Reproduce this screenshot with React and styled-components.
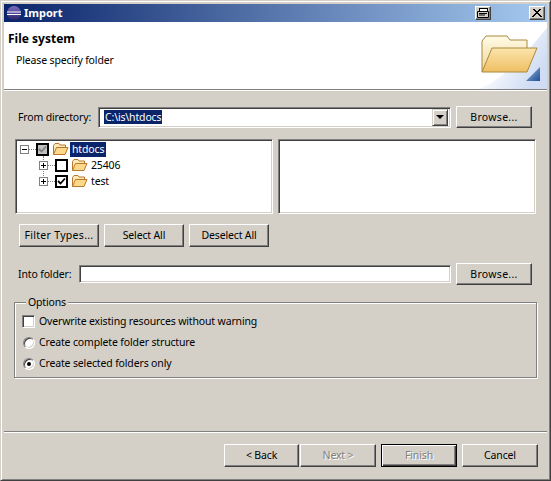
import React from 'react';
import styled, { createGlobalStyle } from 'styled-components';

const Global = createGlobalStyle`
  html, body { margin: 0; padding: 0; background: #d4d0c8; }
  * { box-sizing: border-box; }
`;
const Win = styled.div`
  width: 551px; height: 481px; padding: 3px;
  display: flex; flex-direction: column;
  background: #d4d0c8;
  border: 1px solid; border-color: #d4d0c8 #404040 #404040 #d4d0c8;
  box-shadow: inset 1px 1px 0 #fff, inset -1px -1px 0 #808080;
  font: 10.5px/13px "Noto Sans", sans-serif; letter-spacing: -0.15px; color: #000;
  overflow: hidden;
`;
const TitleBar = styled.div`
  height: 18px; flex: none; display: flex; align-items: center;
  padding: 0 2px 0 2px;
  background: linear-gradient(90deg, #0a246a, #a6caf0);
`;
const TitleText = styled.span`
  font: bold 11px/13px "Noto Sans", sans-serif; letter-spacing: 0; color: #fff; margin: -2px 0 0 2px; flex: 1;
`;
const TitleBtn = styled.div`
  width: 16px; height: 14px; flex: none; margin-left: ${p => p.$gap || 0}px;
  background: #d4d0c8; display: flex; align-items: center; justify-content: center;
  border: 1px solid; border-color: #fff #404040 #404040 #fff;
  box-shadow: inset -1px -1px 0 #808080;
`;
const Header = styled.div`
  height: 67px; flex: none; background: #fff; padding: 9px 0 0 4px;
  display: flex; justify-content: space-between;
`;
const HeadText = styled.div`display: flex; flex-direction: column;`;
const HeadTitle = styled.div`font: bold 12px/15px "Noto Sans", sans-serif; letter-spacing: 0;`;
const HeadSub = styled.div`margin: 7px 0 0 8px; line-height: 14px;`;
const BannerArt = styled.svg`width: 130px; height: 67px; margin-top: -9px; flex: none; display: block;`;
const Rule = styled.div`
  height: 2px; flex: none; border-top: 1px solid #808080; border-bottom: 1px solid #fff;
`;
const Body = styled.div`
  flex: 1; display: flex; flex-direction: column; padding: 15px 11px 0 10px;
`;
const Row = styled.div`
  display: flex; align-items: center; margin-top: ${p => p.$top || 0}px; height: ${p => p.$h}px;
`;
const Label = styled.label`width: ${p => p.$w}px; flex: none; padding-left: 4px;`;
const Sunken = styled.div`
  border: 1px solid; border-color: #808080 #fff #fff #808080;
  box-shadow: inset 1px 1px 0 #404040, inset -1px -1px 0 #d4d0c8;
  background: #fff;
`;
const Combo = styled(Sunken)`
  width: 353px; height: 21px; display: flex; align-items: center; padding: 2px 2px 2px 5px;
`;
const ComboText = styled.span`flex: 1; display: flex;`;
const Sel = styled.span`background: #0a246a; color: #fff; padding: 0 1px; line-height: 14px;`;
const ComboArrow = styled.div`
  width: 16px; height: 17px; background: #d4d0c8; display: flex; align-items: center; justify-content: center;
  border: 1px solid; border-color: #d4d0c8 #404040 #404040 #d4d0c8;
  box-shadow: inset 1px 1px 0 #fff, inset -1px -1px 0 #808080;
  &::after { content: ""; border: 4px solid transparent; border-top: 4px solid #000; border-bottom: 0; }
`;
const Btn = styled.button`
  width: ${p => p.$w}px; height: ${p => p.$h || 23}px; flex: none; padding: 0; margin: 0 0 0 ${p => p.$gap || 0}px;
  font: inherit; letter-spacing: ${p => p.$spread ? '0.3px' : 'inherit'}; color: #000; background: #d4d0c8;
  border: 1px solid; border-color: #fff #404040 #404040 #fff;
  box-shadow: inset -1px -1px 0 #808080;
  &:disabled { color: #808080; text-shadow: 1px 1px 0 #fff; }
`;
const DefaultBtn = styled(Btn)`
  border-color: #000;
  box-shadow: inset 1px 1px 0 #fff, inset -1px -1px 0 #404040, inset -2px -2px 0 #808080;
`;
const Panes = styled.div`display: flex; margin: 11px 0 0 1px; height: 75px; gap: 5px;`;
const TreePane = styled(Sunken)`
  width: 258px; position: relative; padding: 1px 0 0 4px;
`;
const ListPane = styled(Sunken)`width: 259px;`;
const TreeRow = styled.div`
  height: 16px; display: flex; align-items: center; padding-left: ${p => p.$indent}px; position: relative;
`;
const Expander = styled.span`
  width: 9px; height: 9px; flex: none; background: #fff; border: 1px solid #808080; position: relative;
  &::before { content: ""; position: absolute; left: 1px; top: 3px; width: 5px; height: 1px; background: #000; }
  ${p => p.$plus ? `&::after { content: ""; position: absolute; left: 3px; top: 1px; width: 1px; height: 5px; background: #000; }` : ''}
`;
const Dots = styled.span`
  width: 7px; flex: none; height: 0; border-top: 1px dotted #808080;
`;
const VDots = styled.span`
  position: absolute; left: 27px; top: 16px; height: 26px; width: 0; border-left: 1px dotted #808080;
`;
const Check = styled.span`
  width: 13px; height: 13px; flex: none; border: 2px solid #000; display: flex; align-items: center; justify-content: center;
  background: ${p => p.$gray ? '#c0c0c0' : '#fff'};
`;
const TreeLabel = styled.span`
  margin-left: ${p => p.$sel ? 1 : 3}px; padding: 0 ${p => p.$sel ? 2 : 0}px; line-height: 15px;
  ${p => p.$sel ? 'background:#0a246a;color:#fff;' : ''}
`;
const Buttons = styled.div`display: flex; margin: 10px 0 0 5px; gap: 5px;`;
const IntoInput = styled(Sunken)`width: 372px; height: 18px;`;
const Group = styled.fieldset`
  margin: 10px 0 0 0; padding: 2px 7px 0 7px; height: 83px; width: 523px; min-width: 0;
  border: 1px solid #808080; box-shadow: 1px 1px 0 #fff, inset 1px 1px 0 #fff;
`;
const Legend = styled.legend`padding: 0 2px; margin-left: 4px; background: #d4d0c8; line-height: 15px; height: 14px;`;
const Option = styled.div`height: 21px; display: flex; align-items: center;`;
const OptBox = styled.span`
  width: 13px; height: 13px; flex: none; margin-right: 4px; background: #fff;
  border: 1px solid; border-color: #808080 #fff #fff #808080;
  box-shadow: inset 1px 1px 0 #404040, inset -1px -1px 0 #d4d0c8;
`;
const Radio = styled.span`
  width: 12px; height: 12px; flex: none; margin: 0 4px 0 1px; border-radius: 50%; background: #fff; position: relative;
  border: 1px solid; border-color: #808080 #fff #fff #808080;
  box-shadow: inset 1px 1px 0 #404040, inset -1px -1px 0 #d4d0c8;
  ${p => p.$on ? `&::after { content: ""; position: absolute; left: 3px; top: 3px; width: 4px; height: 4px; border-radius: 50%; background: #000; }` : ''}
`;
const Footer = styled.div`
  margin-top: 52px; flex: none; height: 46px; padding: 12px 9px 0 0; display: flex; justify-content: flex-end;
  border-top: 1px solid #808080; box-shadow: inset 0 1px 0 #fff;
`;

const Folder = () => (
  <svg width="17" height="14" viewBox="0 0 17 14" style={{ flex: 'none', marginLeft: 3 }}>
    <path d="M1.5 12.5V3.5L3 1.5H7L8 3H13.5V5.5" fill="#fde9b8" stroke="#b8772a" />
    <path d="M1.5 12.5L4.5 5.5H16L13 12.5Z" fill="#fbd88a" stroke="#b8772a" />
  </svg>
);
const Tick = ({ color = '#000' }) => (
  <svg width="9" height="9" viewBox="0 0 9 9">
    <path d="M1 4L3.5 6.5L8 1.5" fill="none" stroke={color} strokeWidth="1.8" />
  </svg>
);

export default function App() {
  return (
    <>
      <Global />
      <Win>
        <TitleBar>
          <svg width="16" height="16" viewBox="0 0 16 16" style={{ flex: 'none' }}>
            <defs>
              <linearGradient id="ecl" x1="0" y1="0" x2="0" y2="1">
                <stop offset="0" stopColor="#7a6cc0" />
                <stop offset="1" stopColor="#2c2468" />
              </linearGradient>
            </defs>
            <circle cx="8" cy="8" r="7" fill="url(#ecl)" />
            <path d="M1 7H15M1 9.5H15" stroke="#fff" strokeWidth="1" />
          </svg>
          <TitleText>Import</TitleText>
          <TitleBtn $gap={0}>
            <svg width="12" height="10" viewBox="0 0 12 10">
              <rect x="2.5" y="0.5" width="8" height="3" fill="#fff" stroke="#000" />
              <path d="M0.5 3.5H11.5V9.5H0.5Z" fill="#d4d0c8" stroke="#000" />
              <path d="M2 5.5H10M2 7H8" stroke="#000" />
            </svg>
          </TitleBtn>
          <TitleBtn $gap={38}>
            <svg width="10" height="8" viewBox="0 0 10 8">
              <path d="M1 0L9 8M9 0L1 8M2 0L10 8M8 0L0 8" stroke="#000" strokeWidth="1" />
            </svg>
          </TitleBtn>
        </TitleBar>
        <Header>
          <HeadText>
            <HeadTitle>File system</HeadTitle>
            <HeadSub>Please specify folder</HeadSub>
          </HeadText>
          <BannerArt viewBox="0 0 130 67">
            <defs>
              <linearGradient id="bg" x1="0" y1="0.2" x2="0.9" y2="0.7">
                <stop offset="0.3" stopColor="#fff" />
                <stop offset="1" stopColor="#cfdcf3" />
              </linearGradient>
              <linearGradient id="front" x1="0" y1="0" x2="0" y2="1">
                <stop offset="0" stopColor="#fbe5ad" />
                <stop offset="1" stopColor="#eebf62" />
              </linearGradient>
              <linearGradient id="back" x1="0" y1="0" x2="0" y2="1">
                <stop offset="0" stopColor="#fffbe8" />
                <stop offset="1" stopColor="#f0d595" />
              </linearGradient>
              <linearGradient id="tri" x1="0" y1="0" x2="1" y2="1">
                <stop offset="0" stopColor="#9cb8e0" />
                <stop offset="1" stopColor="#1c4d94" />
              </linearGradient>
            </defs>
            <path d="M60 67C85 60 110 30 130 6V67Z" fill="url(#bg)" />
            <path d="M65 50V19L69 14H90L93 18H110V29" fill="url(#back)" stroke="#a98a3c" />
            <path d="M65 50L75 26H120L110 50Z" fill="url(#front)" stroke="#a98a3c" />
            <path d="M109 59L123 45V59Z" fill="url(#tri)" />
          </BannerArt>
        </Header>
        <Rule />
        <Body>
          <Row $h={22}>
            <Label $w={84}>From directory:</Label>
            <Combo>
              <ComboText><Sel>C:\is\htdocs</Sel></ComboText>
              <ComboArrow />
            </Combo>
            <Btn $w={76} $h={22} $gap={5} $spread>Browse...</Btn>
          </Row>
          <Panes>
            <TreePane>
              <VDots />
              <TreeRow $indent={0}>
                <Expander />
                <Dots />
                <Check $gray><Tick color="#808080" /></Check>
                <Folder />
                <TreeLabel $sel>htdocs</TreeLabel>
              </TreeRow>
              <TreeRow $indent={19}>
                <Expander $plus />
                <Dots />
                <Check />
                <Folder />
                <TreeLabel>25406</TreeLabel>
              </TreeRow>
              <TreeRow $indent={19}>
                <Expander $plus />
                <Dots />
                <Check><Tick /></Check>
                <Folder />
                <TreeLabel>test</TreeLabel>
              </TreeRow>
            </TreePane>
            <ListPane />
          </Panes>
          <Buttons>
            <Btn $w={80} $spread>Filter Types...</Btn>
            <Btn $w={80}>Select All</Btn>
            <Btn $w={80}>Deselect All</Btn>
          </Buttons>
          <Row $h={22} $top={16}>
            <Label $w={65}>Into folder:</Label>
            <IntoInput />
            <Btn $w={76} $h={22} $gap={5} $spread>Browse...</Btn>
          </Row>
          <Group>
            <Legend>Options</Legend>
            <Option><OptBox />Overwrite existing resources without warning</Option>
            <Option><Radio />Create complete folder structure</Option>
            <Option><Radio $on />Create selected folders only</Option>
          </Group>
        </Body>
        <Footer>
          <Btn $w={75}>&lt; Back</Btn>
          <Btn $w={76} $gap={1} disabled>Next &gt;</Btn>
          <DefaultBtn $w={76} $gap={5} disabled>Finish</DefaultBtn>
          <Btn $w={76} $gap={5}>Cancel</Btn>
        </Footer>
      </Win>
    </>
  );
}
